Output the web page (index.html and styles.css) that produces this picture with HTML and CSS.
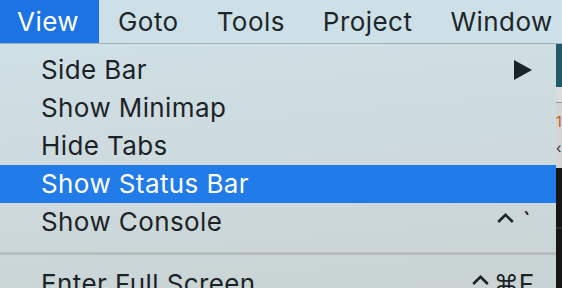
FILE: index.html
```html
<!DOCTYPE html>
<html>
<head>
<meta charset="utf-8">
<link rel="stylesheet" href="styles.css">
</head>
<body>
<div class="screen">
  <div class="menubar">
    <div class="mb-item active">View</div>
    <div class="mb-item">Goto</div>
    <div class="mb-item">Tools</div>
    <div class="mb-item">Project</div>
    <div class="mb-item">Window</div>
  </div>
  <div class="below">
    <div class="menu">
      <div class="row"><span class="label">Side Bar</span><span class="arrow"></span></div>
      <div class="row"><span class="label">Show Minimap</span></div>
      <div class="row"><span class="label">Hide Tabs</span></div>
      <div class="row selected"><span class="label">Show Status Bar</span></div>
      <div class="row"><span class="label">Show Console</span><span class="key"><svg class="ctrl" width="17" height="10" viewBox="0 0 17 10"><polyline points="1.2,9 8.5,1.8 15.8,9" fill="none" stroke="#1c2326" stroke-width="2.6"/></svg><span class="tick">`</span></span></div>
      <div class="sep"><div class="sep-line"></div></div>
      <div class="row"><span class="label">Enter Full Screen</span><span class="key"><svg class="ctrl" width="17" height="10" viewBox="0 0 17 10"><polyline points="1.2,9 8.5,1.8 15.8,9" fill="none" stroke="#1c2326" stroke-width="2.6"/></svg><span class="cmd">⌘</span><span class="fkey">F</span></span></div>
    </div>
    <div class="strip">
      <div class="s-teal"></div>
      <div class="s-light"></div>
      <div class="s-line"></div>
      <div class="s-gray"><span class="s-glyph orange">1</span><span class="s-glyph">‹</span></div>
      <div class="s-dark"></div>
      <div class="s-dark2"></div>
      <div class="s-dark"></div>
    </div>
  </div>
</div>
</body>
</html>
```

FILE: styles.css
```css
html, body {
  margin: 0;
  padding: 0;
}
body {
  width: 562px;
  height: 288px;
  overflow: hidden;
  background: #cfdde2;
  font-family: "Inter", "Liberation Sans", sans-serif;
}
.screen {
  display: flex;
  flex-direction: column;
  width: 562px;
  height: 288px;
}
.menubar {
  display: flex;
  height: 43px;
  background: #cde0e7;
  border-bottom: 1px solid #9fb1b8;
  flex: none;
}
.mb-item {
  display: flex;
  align-items: center;
  padding: 1px 19px 0;
  font-size: 26px;
  letter-spacing: 0.45px;
  color: #1d2629;
  line-height: 1;
}
.mb-item.active {
  background: #1c73e3;
  color: #ffffff;
  padding-left: 17px;
  padding-right: 20px;
}
.below {
  display: flex;
  flex: 1;
  min-height: 0;
}
.menu {
  width: 556px;
  flex: none;
  padding-top: 7px;
  background: linear-gradient(175deg, #cfe0e6 0%, #cdd9dc 55%, #c9d3d3 100%);
  overflow: hidden;
}
.row {
  display: flex;
  align-items: center;
  justify-content: space-between;
  height: 38px;
  padding: 0 24px 0 41px;
  font-size: 26px;
  letter-spacing: 0.4px;
  color: #1c2326;
}
.row.selected {
  background: #217be9;
  color: #ffffff;
}
.label {
  line-height: 1;
}
.arrow {
  width: 0;
  height: 0;
  border-top: 10px solid transparent;
  border-bottom: 10px solid transparent;
  border-left: 18px solid #1a2428;
}
.key {
  display: flex;
  align-items: center;
  font-size: 26px;
  line-height: 1;
  letter-spacing: 0;
}
.ctrl {
  margin-bottom: 9px;
  margin-right: 5px;
  flex: none;
}
.tick {
  margin-right: 1px;
  margin-left: 4px;
}
.cmd {
  font-family: "DejaVu Sans", sans-serif;
  font-size: 25px;
  margin-right: 0;
}
.fkey {
  margin-right: -2px;
}
.sep {
  height: 24px;
  display: flex;
  align-items: center;
}
.sep-line {
  width: 100%;
  height: 3px;
  background: #b6bdbd;
}
.strip {
  width: 6px;
  flex: none;
  display: flex;
  flex-direction: column;
}
.s-teal {
  height: 50px;
  background: #225a68;
}
.s-light {
  height: 17px;
  background: #dcdcdc;
}
.s-line {
  height: 1px;
  background: #9a9a9a;
}
.s-gray {
  height: 76px;
  background: #d4d4d4;
  display: flex;
  flex-direction: column;
  overflow: hidden;
  font-size: 14px;
  line-height: 1;
}
.s-glyph {
  margin-top: 12px;
  color: #2a2f35;
}
.s-glyph.orange {
  color: #c06010;
}
.s-dark {
  height: 68px;
  background: #161614;
}
.s-dark2 {
  height: 3px;
  background: #2c2c2a;
}
```
